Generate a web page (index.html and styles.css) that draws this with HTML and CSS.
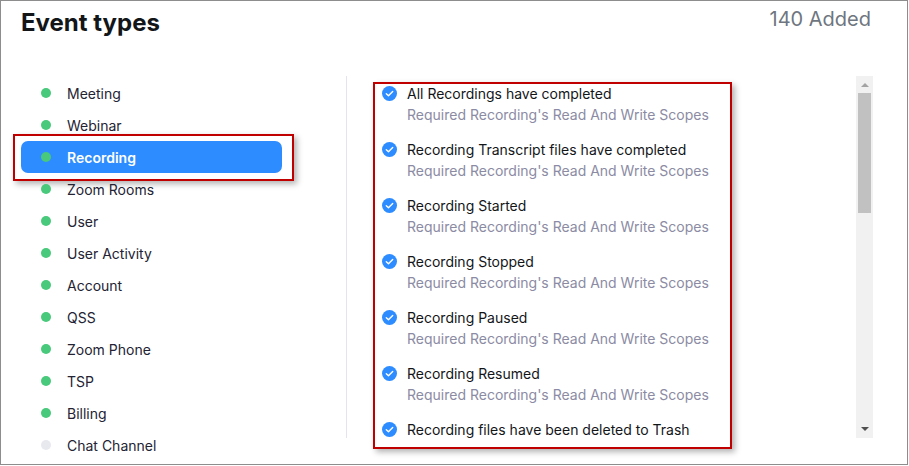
FILE: index.html
```html
<!DOCTYPE html>
<html lang="en">
<head>
    <meta charset="UTF-8">
    <meta name="viewport" content="width=device-width, initial-scale=1.0">
    <title>Event types</title>
    <link rel="stylesheet" href="styles.css">
</head>
<body>
    <div class="panel">
        <div class="header">
            <h1>Event types</h1>
            <span class="count">140 Added</span>
        </div>

        <div class="content">
            <ul class="types">
                <li class="type"><span class="dot"></span>Meeting</li>
                <li class="type"><span class="dot"></span>Webinar</li>
                <li class="type active"><span class="dot"></span>Recording</li>
                <li class="type"><span class="dot"></span>Zoom Rooms</li>
                <li class="type"><span class="dot"></span>User</li>
                <li class="type"><span class="dot"></span>User Activity</li>
                <li class="type"><span class="dot"></span>Account</li>
                <li class="type"><span class="dot"></span>QSS</li>
                <li class="type"><span class="dot"></span>Zoom Phone</li>
                <li class="type"><span class="dot"></span>TSP</li>
                <li class="type"><span class="dot"></span>Billing</li>
                <li class="type off"><span class="dot"></span>Chat Channel</li>
            </ul>

            <div class="events-pane">
                <ul class="events">
                    <li class="event">
                        <div class="event-title"><svg class="check" viewBox="0 0 16 16"><circle cx="8" cy="8" r="8"/><path d="M4.6 8.2l2.3 2.2 4.5-4.6"/></svg>All Recordings have completed</div>
                        <div class="event-sub">Required Recording's Read And Write Scopes</div>
                    </li>
                    <li class="event">
                        <div class="event-title"><svg class="check" viewBox="0 0 16 16"><circle cx="8" cy="8" r="8"/><path d="M4.6 8.2l2.3 2.2 4.5-4.6"/></svg>Recording Transcript files have completed</div>
                        <div class="event-sub">Required Recording's Read And Write Scopes</div>
                    </li>
                    <li class="event">
                        <div class="event-title"><svg class="check" viewBox="0 0 16 16"><circle cx="8" cy="8" r="8"/><path d="M4.6 8.2l2.3 2.2 4.5-4.6"/></svg>Recording Started</div>
                        <div class="event-sub">Required Recording's Read And Write Scopes</div>
                    </li>
                    <li class="event">
                        <div class="event-title"><svg class="check" viewBox="0 0 16 16"><circle cx="8" cy="8" r="8"/><path d="M4.6 8.2l2.3 2.2 4.5-4.6"/></svg>Recording Stopped</div>
                        <div class="event-sub">Required Recording's Read And Write Scopes</div>
                    </li>
                    <li class="event">
                        <div class="event-title"><svg class="check" viewBox="0 0 16 16"><circle cx="8" cy="8" r="8"/><path d="M4.6 8.2l2.3 2.2 4.5-4.6"/></svg>Recording Paused</div>
                        <div class="event-sub">Required Recording's Read And Write Scopes</div>
                    </li>
                    <li class="event">
                        <div class="event-title"><svg class="check" viewBox="0 0 16 16"><circle cx="8" cy="8" r="8"/><path d="M4.6 8.2l2.3 2.2 4.5-4.6"/></svg>Recording Resumed</div>
                        <div class="event-sub">Required Recording's Read And Write Scopes</div>
                    </li>
                    <li class="event">
                        <div class="event-title"><svg class="check" viewBox="0 0 16 16"><circle cx="8" cy="8" r="8"/><path d="M4.6 8.2l2.3 2.2 4.5-4.6"/></svg>Recording files have been deleted to Trash</div>
                    </li>
                </ul>

                <div class="scrollbar">
                    <span class="arrow up"></span>
                    <span class="thumb"></span>
                    <span class="arrow down"></span>
                </div>

                <!-- highlight box drawn over the event list -->
                <div class="highlight"></div>
            </div>
        </div>
    </div>
</body>
</html>
```

FILE: styles.css
```css
body {
    margin: 0;
    font-family: Inter, "Noto Sans", sans-serif;
    color: #232333;
    background: #fff;
}
ul {
    list-style: none;
    margin: 0;
    padding: 0;
}
.panel {
    box-sizing: border-box;
    width: 908px;
    height: 465px;
    border: 1px solid #8d8d8d;
    padding: 0 34px 0 20px;
    overflow: hidden;
}
.header {
    display: flex;
    justify-content: space-between;
    align-items: flex-start;
    height: 75px;
}
.header h1 {
    margin: 7px 0 0;
    font-size: 24px;
    font-weight: 700;
    line-height: 29px;
    color: #131619;
}
.count {
    margin: 6px 2px 0 0;
    font-size: 20px;
    line-height: 24px;
    color: #6e7680;
}
.content {
    display: flex;
    align-items: flex-start;
}
.types {
    width: 261px;
    margin: 1px 64px 0 0;
}
.type {
    position: relative;
    display: flex;
    align-items: center;
    height: 32px;
    padding-left: 20px;
    font-size: 14px;
    color: #232333;
    border-radius: 7px;
}
.dot {
    width: 10px;
    height: 10px;
    border-radius: 50%;
    background: #48c97b;
    margin-right: 16px;
}
.type.off .dot {
    background: #e8e8ef;
}
.type.active {
    background: #2d8cff;
    color: #fff;
    font-weight: 600;
}
.type.active::after {
    content: "";
    position: absolute;
    left: -8px;
    top: -7px;
    width: 281px;
    height: 47px;
    box-sizing: border-box;
    border: 2px solid #c00000;
    box-shadow: 3px 3px 6px rgba(0, 0, 0, 0.3);
}
.events-pane {
    position: relative;
    flex: 1;
    display: flex;
    height: 362px;
    border-left: 1px solid #e4e4ed;
}
.events {
    flex: 1;
    padding: 7px 0 0 35px;
}
.event {
    margin-bottom: 14px;
    font-size: 14px;
    line-height: 21px;
}
.event-title {
    display: flex;
    align-items: center;
    color: #131619;
}
.check {
    width: 15px;
    height: 15px;
    margin-right: 10px;
}
.check circle {
    fill: #2d8cff;
}
.check path {
    fill: none;
    stroke: #fff;
    stroke-width: 1.5;
    stroke-linecap: round;
    stroke-linejoin: round;
}
.event-sub {
    padding-left: 25px;
    color: #8b8ba3;
}
.scrollbar {
    position: relative;
    width: 17px;
    background: #f1f1f1;
}
.thumb {
    position: absolute;
    left: 2px;
    top: 17px;
    width: 13px;
    height: 120px;
    background: #c1c1c1;
}
.arrow {
    position: absolute;
    left: 5px;
    width: 0;
    height: 0;
    border-left: 4px solid transparent;
    border-right: 4px solid transparent;
}
.arrow.up {
    top: 7px;
    border-bottom: 4px solid #a3a3a3;
}
.arrow.down {
    bottom: 7px;
    border-top: 4px solid #505050;
}
.highlight {
    position: absolute;
    left: 26px;
    top: 6px;
    width: 359px;
    height: 367px;
    box-sizing: border-box;
    border: 2px solid #c00000;
    box-shadow: 3px 3px 6px rgba(0, 0, 0, 0.3);
}
```
